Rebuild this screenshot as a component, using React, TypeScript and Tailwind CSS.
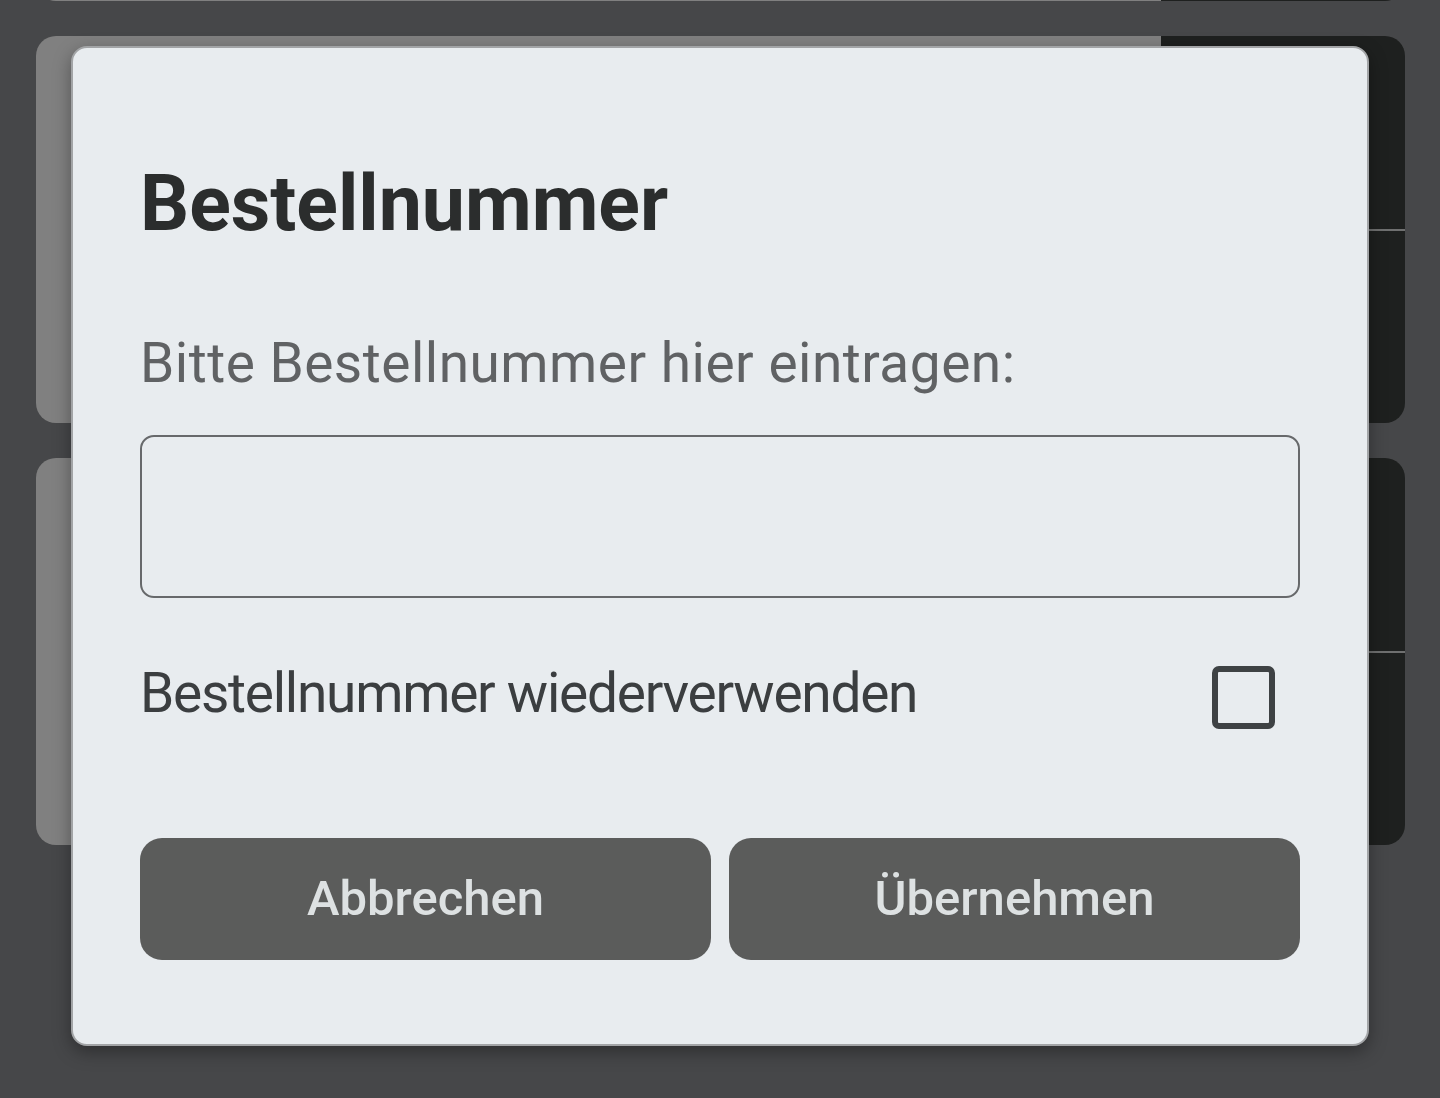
import React from "react";

function BackgroundCard() {
  return (
    <div className="flex h-[387px] w-[1369px] shrink-0 overflow-hidden rounded-[20px]">
      <div className="flex-1 bg-[#808080]" />
      <div className="flex w-[244px] flex-col bg-[#1e201f]">
        <div className="flex-1" />
        <div className="h-[2px] bg-[#6f7070]" />
        <div className="flex-1" />
      </div>
    </div>
  );
}

export default function App() {
  return (
    <div
      className="relative h-[1098px] w-[1440px] overflow-hidden bg-[#464749]"
      style={{ fontFamily: "Roboto, 'Noto Sans', sans-serif" }}
    >
      {/* list behind the dialog */}
      <div className="mt-[-386px] flex flex-col gap-[35px] pl-[36px]">
        <BackgroundCard />
        <BackgroundCard />
        <BackgroundCard />
      </div>

      {/* dialog */}
      <div className="absolute left-[71px] top-[46px] flex h-[1000px] w-[1298px] flex-col rounded-[16px] border-2 border-[#a2a4a6] bg-[#e8ecef] px-[67px] pb-[84px] pt-[117px] shadow-[0_6px_18px_rgba(0,0,0,0.35)]">
        <h1 className="text-[77px] font-bold leading-[78px] text-[#2b2d2d]">
          Bestellnummer
        </h1>

        <p className="mt-[93px] text-[55px] leading-[55px] tracking-[0.5px] text-[#606264]">
          Bitte Bestellnummer hier eintragen:
        </p>

        <input
          type="text"
          className="mt-[44px] h-[163px] w-full rounded-[14px] border-2 border-[#67696b] bg-transparent px-6 text-[55px] text-[#2b2d2d] outline-none"
        />

        <div className="mt-[68px] flex h-[63px] items-start justify-between">
          <span className="text-[55px] leading-[55px] tracking-[-1.25px] text-[#3b3e40]">
            Bestellnummer wiederverwenden
          </span>
          <div className="mr-[25px] h-[63px] w-[63px] rounded-[7px] border-[6px] border-[#3e4244]" />
        </div>

        <div className="mt-[109px] flex gap-[18px]">
          <button className="flex h-[122px] flex-1 items-center justify-center rounded-[22px] bg-[#5b5c5b] text-[49px] font-medium text-[#dde1e2]">
            Abbrechen
          </button>
          <button className="flex h-[122px] flex-1 items-center justify-center rounded-[22px] bg-[#5b5c5b] text-[49px] font-medium text-[#dde1e2]">
            Übernehmen
          </button>
        </div>
      </div>
    </div>
  );
}
